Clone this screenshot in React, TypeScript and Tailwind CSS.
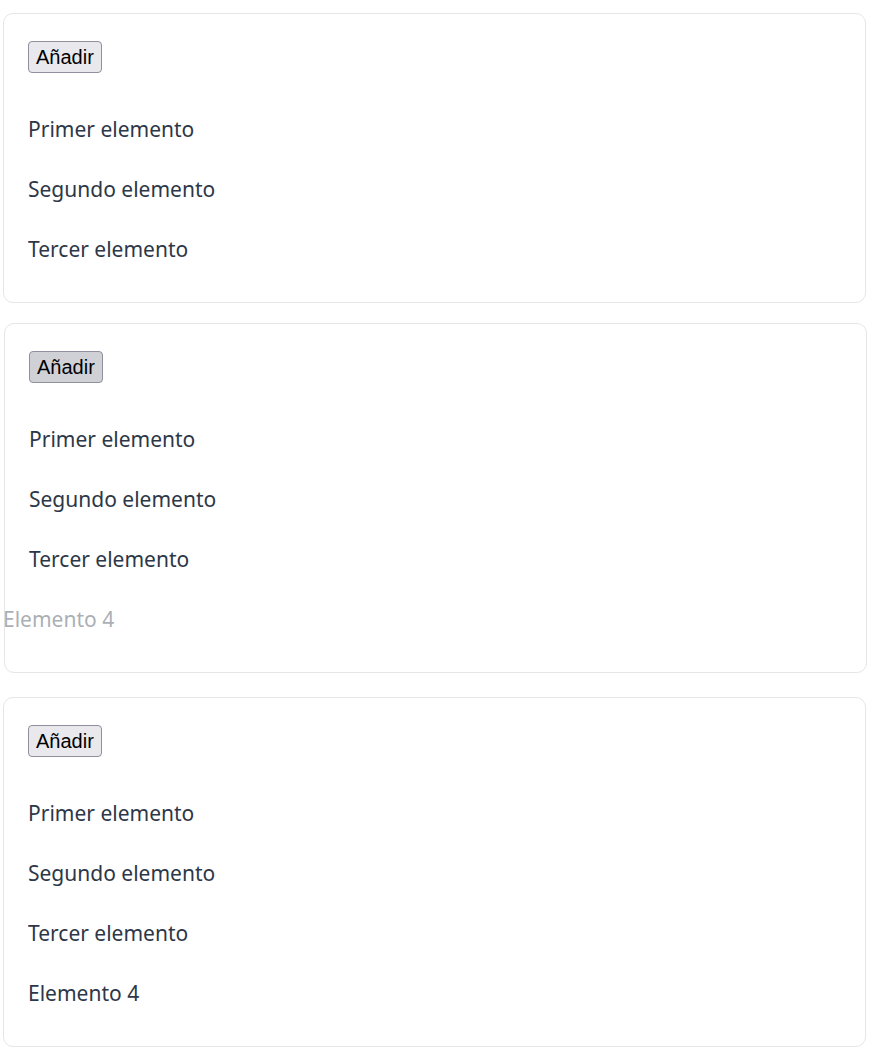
import React from 'react';

const items = ['Primer elemento', 'Segundo elemento', 'Tercer elemento'];

// ── List card ──────────────────────────────────────────────────────────────────

function ListCard({
  extra,
  leaving,
  pressed,
  className,
}: {
  extra?: string;
  leaving?: boolean;
  pressed?: boolean;
  className?: string;
}) {
  return (
    <div
      className={`w-[863px] rounded-[10px] border border-[#e6e6e6] bg-white px-6 pt-[27px] pb-[23px] ${className ?? ''}`}
    >
      <button
        className={`h-8 rounded-[4px] border border-[#8f8f9d] px-[7px] font-['Liberation_Sans',Arial,sans-serif] text-[20px] leading-none text-black ${
          pressed ? 'bg-[#d0d0d7]' : 'bg-[#e9e9ed]'
        }`}
      >
        Añadir
      </button>
      <ul className="mt-[26px]">
        {items.map((label) => (
          <li key={label} className="flex h-[60px] items-center pt-px text-[21px] text-[#2d3748]">
            {label}
          </li>
        ))}
        {extra && (
          <li
            className={`flex h-[60px] items-center pt-px text-[21px] text-[#2d3748] ${
              leaving ? '-ml-[26px] opacity-40' : ''
            }`}
          >
            {extra}
          </li>
        )}
      </ul>
    </div>
  );
}

// ── Page ───────────────────────────────────────────────────────────────────────

export default function App() {
  return (
    <div
      className="min-h-[1053px] bg-white pl-[3px]"
      style={{ fontFamily: '"Segoe UI", "Noto Sans", sans-serif' }}
    >
      <div className="pt-[13px]">
        <ListCard />
        <ListCard extra="Elemento 4" leaving pressed className="mt-[20px] ml-px" />
        <ListCard extra="Elemento 4" className="mt-[24px]" />
      </div>
    </div>
  );
}
